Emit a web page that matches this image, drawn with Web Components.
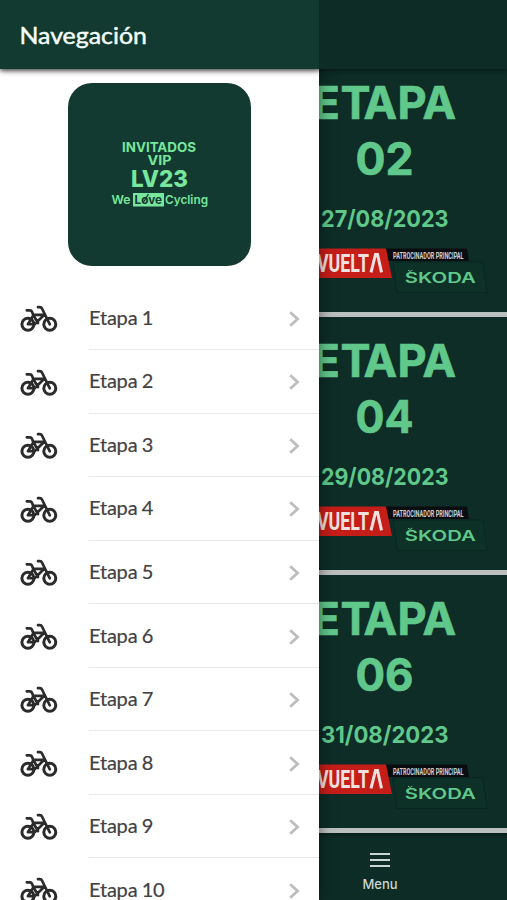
<!DOCTYPE html>
<html lang="es">
<head>
<meta charset="utf-8">
<title>Navegación</title>
<style>
html,body{margin:0;height:100%;overflow:hidden}
body{font-family:Lato,"Noto Sans",sans-serif}
</style>
</head>
<body>
<nav-app></nav-app>
<script>
function define(name, html) {
  customElements.define(name, class extends HTMLElement {
    constructor() {
      super();
      const values = k => this.getAttribute(k) || '';
      this.attachShadow({mode: 'open'}).innerHTML = typeof html === 'function' ? html(values) : html;
    }
  });
}

define('bike-icon', `<style>:host{display:block;width:38px;height:28px}svg{display:block}</style>
<svg width="38" height="28" viewBox="0 0 38 28" fill="none" stroke="#2b2b2b" stroke-width="3" stroke-linecap="round" stroke-linejoin="round">
<circle cx="7.9" cy="19.3" r="6"/><circle cx="29.8" cy="19.3" r="6"/>
<path d="M6.8 5.3h3.1q1.6 0 2.1 1.5l1.3 3.3M18 2.2h1.8q1.6 0 2.3 1.5l7.7 15.6M13.2 9.9h11M13.4 10.2L7.9 19.2h6.7l9.2-9M13.4 10.2l4.6 7.8" stroke-width="2.7"/></svg>`);

define('brand-tile', `<style>:host{display:block;width:183px;height:183px;border-radius:24px;background:#123a30;overflow:hidden}
svg{display:block}text{font-family:Inter,sans-serif;font-weight:700;fill:#78e69c}</style>
<svg width="183" height="183" viewBox="68 83 183 183">
<text x="122" y="151.8" font-size="13.2" textLength="74" lengthAdjust="spacingAndGlyphs">INVITADOS</text>
<text x="147.5" y="165" font-size="13" textLength="24" lengthAdjust="spacingAndGlyphs">VIP</text>
<text x="131" y="187" font-size="23" textLength="57" lengthAdjust="spacingAndGlyphs" style="font-weight:800">LV23</text>
<text x="111.5" y="204" font-size="12" textLength="19" lengthAdjust="spacingAndGlyphs" style="font-weight:600">We</text>
<rect x="133" y="193" width="31" height="13.5" fill="#78e69c"/>
<text x="134.6" y="204" font-size="12" textLength="27.5" lengthAdjust="spacingAndGlyphs" style="fill:#123a30">Love</text>
<path d="M143 203l5.5-9" stroke="#123a30" stroke-width="1.3"/>
<text x="165" y="204" font-size="12" textLength="43" lengthAdjust="spacingAndGlyphs" style="font-weight:600">Cycling</text>
</svg>`);

define('nav-item', `<style>
:host{display:flex;height:63.55px;box-sizing:border-box;padding-left:20px;align-items:stretch}
bike-icon{margin-top:18.5px;flex:none}
.row{margin-left:31px;flex:1;display:flex;align-items:center;justify-content:space-between;border-bottom:1px solid #e9e9e9;padding-right:18px;box-sizing:border-box;font-size:20px;letter-spacing:-.2px;word-spacing:-.6px;color:#424242;line-height:24px}
span{margin-top:-2px;-webkit-text-stroke:.2px #424242}
.chev{display:block;margin-top:2px}
</style><bike-icon></bike-icon><div class="row"><span><slot></slot></span>
<svg class="chev" width="13" height="18" viewBox="0 0 13 18" fill="none" stroke="#bdbdbd" stroke-width="2.8"><path d="M2.2 2.2L9.6 9l-7.4 6.8"/></svg></div>`);

define('nav-drawer', `<style>
:host{display:flex;flex-direction:column;width:318.5px;height:900px;background:#fff;box-shadow:0 0 14px rgba(0,0,0,.5);overflow:hidden}
header{flex:none;height:69px;background:#123a30;color:#f4fffb;display:flex;align-items:center;padding:2px 21px 0;box-sizing:border-box;box-shadow:0 1px 6px rgba(0,0,0,.55);z-index:1}
header svg{display:block}
brand-tile{align-self:center;margin:14px 0 20.5px;flex:none}
nav{flex:none}
</style><header><svg width="128" height="34" viewBox="0 0 128 34"><text x="-1.6" y="25" font-family="Lato,sans-serif" font-size="23.5" textLength="127.5" lengthAdjust="spacingAndGlyphs" fill="#f4fffb" stroke="#f4fffb" stroke-width=".45">Navegación</text></svg></header><brand-tile></brand-tile><nav>${
Array.from({length: 10}, (_, i) => `<nav-item>Etapa ${i + 1}</nav-item>`).join('')}</nav>`);

define('stage-card', v => `<style>
:host{display:block;height:253px;background:#0d2d26;overflow:hidden}
svg{display:block}.g{font-family:Inter,sans-serif;font-weight:700;fill:#61c88b}
.big{stroke:#61c88b;stroke-width:.7px}
</style><svg width="250" height="253" viewBox="257 59 250 253">
<text class="g big" x="312.5 340.6 363.6 397.6 422.6" y="119.4" font-size="45">ETAPA</text>
<text class="g big" x="355.5" y="174.8" font-size="45" textLength="58" lengthAdjust="spacingAndGlyphs">${v('number')}</text>
<text class="g" x="321" y="227" font-size="23.5" textLength="127.5" lengthAdjust="spacingAndGlyphs">${v('date')}</text>
<path d="M385 248.5h82l2 12.5h-81z" fill="#0a0d10"/>
<path d="M393 262h90l4 30.5h-90z" fill="#0d3027" stroke="#092720"/>
<path d="M270 248.5h116l6 29.5H270z" fill="#c51d18"/>
<text x="317" y="272.4" font-family="Roboto,sans-serif" font-weight="700" font-size="26.5" textLength="52" lengthAdjust="spacingAndGlyphs" fill="#eee1df">VUELT</text>
<path d="M371 272.4l4.5-18h2l4 18" fill="none" stroke="#eee1df" stroke-width="3"/>
<text x="393" y="258.6" font-family="Roboto,sans-serif" font-weight="700" font-size="9" textLength="70.5" lengthAdjust="spacingAndGlyphs" fill="#d1d1d1">PATROCINADOR PRINCIPAL</text>
<text class="g" x="404.8" y="282.6" font-size="14.5" textLength="71" lengthAdjust="spacingAndGlyphs" style="font-weight:600">SKODA</text>
<path d="M408 270.2l2.2 1.3 2.2-1.3" fill="none" stroke="#61c88b"/>
</svg>`);

define('menu-button', `<style>:host{display:flex;flex-direction:column;align-items:center;width:60px;color:#cbd5d2;font:500 13px Inter,sans-serif}
i{display:block;width:20px;height:2px;background:#cbd5d2;margin-bottom:4px}span{margin-top:5px;line-height:17px}</style><i></i><i></i><i></i><span>Menu</span>`);

define('stage-page', `<style>
:host{display:flex;flex-direction:column;width:507px;height:900px;background:#0b2b24}
header{flex:none;height:69px;background:#0d2c25;box-shadow:0 1px 5px rgba(0,0,0,.55);z-index:1}
main{display:flex;flex-direction:column;align-items:stretch;gap:5px;height:764px;overflow:hidden;background:#bbbfbe;justify-content:flex-end;padding-bottom:5px;box-sizing:border-box}
stage-card{flex:none;padding-left:257px}
footer{flex:1;display:flex;padding:20px 0 0 350px;background:linear-gradient(#081f1a,#0d2c25 5px)}
</style><header></header><main>
<stage-card number="02" date="27/08/2023"></stage-card>
<stage-card number="04" date="29/08/2023"></stage-card>
<stage-card number="06" date="31/08/2023"></stage-card>
</main><footer><menu-button></menu-button></footer>`);

define('nav-app', `<style>:host{display:block;position:relative;width:507px;height:900px;overflow:hidden}
nav-drawer{position:absolute;left:0;top:0}</style><stage-page></stage-page><nav-drawer></nav-drawer>`);
</script>
</body>
</html>
